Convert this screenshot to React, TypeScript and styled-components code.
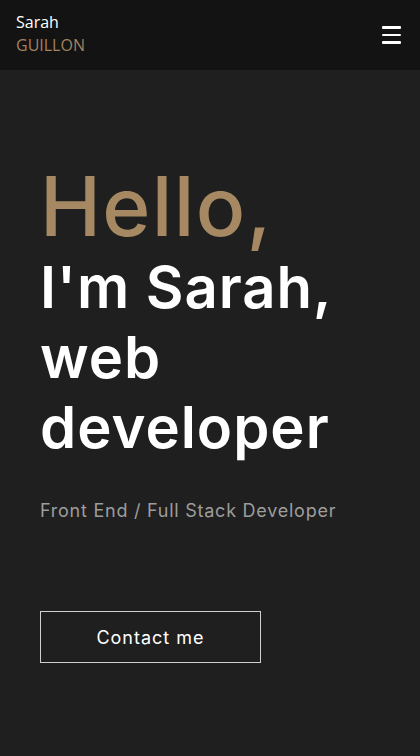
import React from "react";
import styled, { createGlobalStyle } from "styled-components";

const GlobalStyle = createGlobalStyle`
  html, body {
    margin: 0;
    padding: 0;
    background: #1f1f1f;
  }
  * {
    box-sizing: border-box;
  }
`;

const App = () => {
  return (
    <>
      <GlobalStyle />
      <Page>
        <Header>
          <Brand>
            <FirstName>Sarah</FirstName>
            <LastName>GUILLON</LastName>
          </Brand>
          <MenuButton aria-label="menu">
            <span />
            <span />
            <span />
          </MenuButton>
        </Header>
        <Hero>
          <Hello>Hello,</Hello>
          <Headline>
            I'm Sarah,
            <br />
            web
            <br />
            developer
          </Headline>
          <Subtitle>Front End / Full Stack Developer</Subtitle>
          <ContactButton>Contact me</ContactButton>
        </Hero>
      </Page>
    </>
  );
};

export default App;

const Page = styled.div`
  min-height: 756px;
  background: #1f1f1f;
  display: flex;
  flex-direction: column;
`;

const Header = styled.header`
  height: 70px;
  background: #131313;
  display: flex;
  align-items: center;
  justify-content: space-between;
  padding: 0 19px 0 16px;
`;

const Brand = styled.div`
  display: flex;
  flex-direction: column;
  font-family: "Open Sans", "Noto Sans", sans-serif;
  font-size: 16px;
  line-height: 23px;
  margin-top: -3px;
`;

const FirstName = styled.span`
  color: #ffffff;
  font-weight: 500;
`;

const LastName = styled.span`
  color: #a3825e;
`;

const MenuButton = styled.button`
  width: 19px;
  padding: 0;
  background: none;
  border: none;
  display: flex;
  flex-direction: column;
  gap: 5px;
  cursor: pointer;

  span {
    display: block;
    height: 2.5px;
    background: #ffffff;
    border-radius: 1px;
  }
`;

const Hero = styled.main`
  padding: 92px 40px 0 40px;
  display: flex;
  flex-direction: column;
  align-items: flex-start;
  font-family: Inter, "Liberation Sans", sans-serif;
`;

const Hello = styled.h1`
  margin: 0;
  font-size: 82px;
  font-weight: 500;
  line-height: 90px;
  color: #a68962;
  letter-spacing: 1.3px;
`;

const Headline = styled.h2`
  margin: 0;
  font-size: 58px;
  font-weight: 600;
  line-height: 70px;
  color: #ffffff;
  letter-spacing: 1px;
`;

const Subtitle = styled.p`
  margin: 37px 0 0 0;
  font-size: 18px;
  line-height: 24px;
  color: #9d9d9d;
  letter-spacing: 0.75px;
`;

const ContactButton = styled.button`
  margin-top: 88px;
  width: 221px;
  height: 52px;
  background: transparent;
  border: 1px solid #d0d0d0;
  color: #ffffff;
  font-family: Inter, "Liberation Sans", sans-serif;
  font-size: 18px;
  letter-spacing: 1px;
  cursor: pointer;
`;
